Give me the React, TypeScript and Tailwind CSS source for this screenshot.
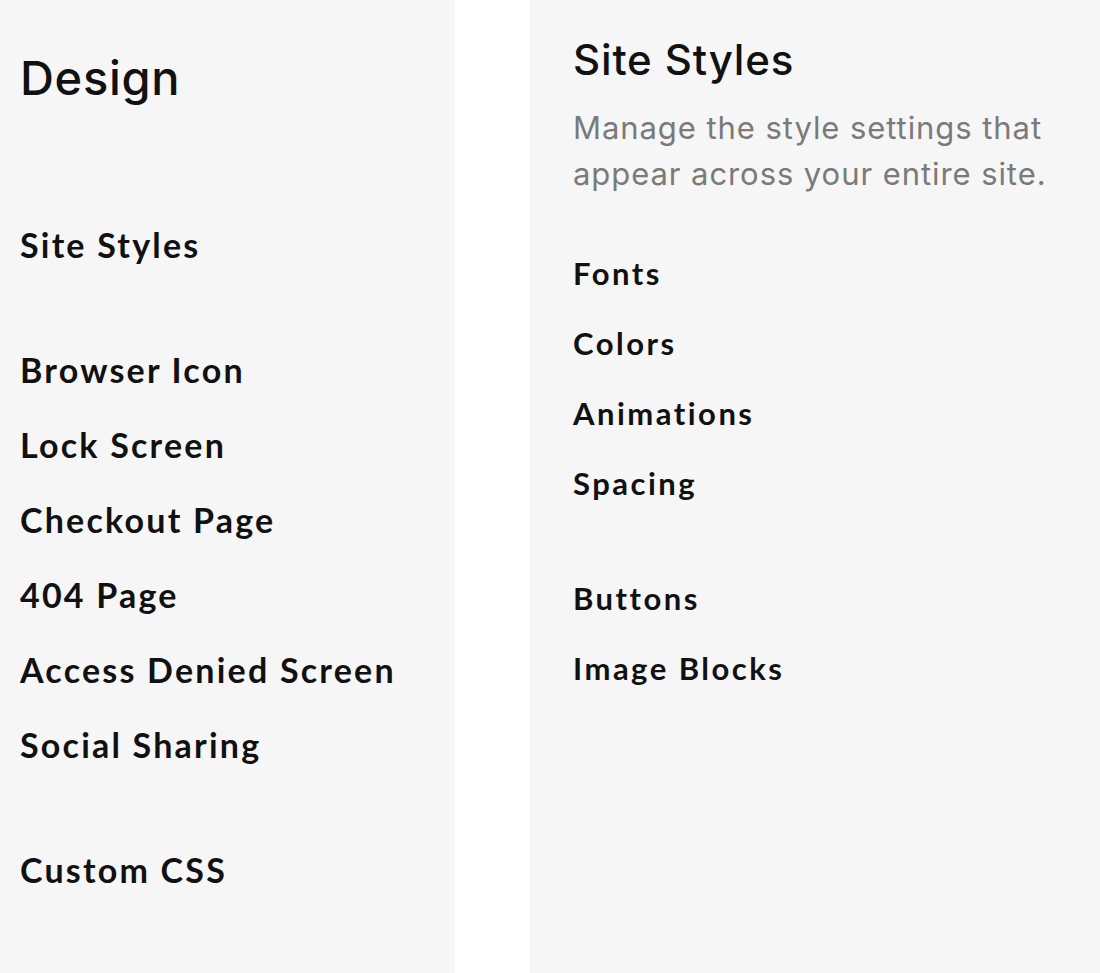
import React from "react";

const groupsLeft = [
  ["Site Styles"],
  [
    "Browser Icon",
    "Lock Screen",
    "Checkout Page",
    "404 Page",
    "Access Denied Screen",
    "Social Sharing",
  ],
  ["Custom CSS"],
];

const groupsRight = [
  ["Fonts", "Colors", "Animations", "Spacing"],
  ["Buttons", "Image Blocks"],
];

const App: React.FC = () => {
  return (
    <div className="flex h-[973px] w-full bg-white text-[#111]">
      {/* left menu */}
      <div className="w-[455px] bg-[#f6f6f6] pl-[20px] pt-[50px]">
        <h1 className="font-['Inter',sans-serif] text-[47px] leading-[56px] font-medium tracking-[0.015em]">
          Design
        </h1>
        <div className="mt-[101px] flex flex-col gap-[50px]">
          {groupsLeft.map((group, i) => (
            <div key={i} className="flex flex-col">
              {group.map((item) => (
                <div
                  key={item}
                  className="flex h-[75px] items-center font-['Lato',sans-serif] text-[34px] font-bold tracking-[0.065em]"
                >
                  {item}
                </div>
              ))}
            </div>
          ))}
        </div>
      </div>

      <div className="w-[75px] bg-white" />

      {/* right panel */}
      <div className="flex-1 bg-[#f6f6f6] pl-[43px] pt-[36px]">
        <h2 className="font-['Inter',sans-serif] text-[42px] leading-[48px] font-medium tracking-[0.02em]">
          Site Styles
        </h2>
        <p className="mt-[21px] w-[500px] font-['Inter',sans-serif] text-[31px] leading-[46px] tracking-[0.03em] text-[#7a7a7a]">
          Manage the style settings that appear across your entire site.
        </p>
        <div className="mt-[41px] flex flex-col gap-[45px]">
          {groupsRight.map((group, i) => (
            <div key={i} className="flex flex-col">
              {group.map((item) => (
                <div
                  key={item}
                  className="flex h-[70px] items-center font-['Lato',sans-serif] text-[31px] font-bold tracking-[0.08em]"
                >
                  {item}
                </div>
              ))}
            </div>
          ))}
        </div>
      </div>
    </div>
  );
};

export default App;
